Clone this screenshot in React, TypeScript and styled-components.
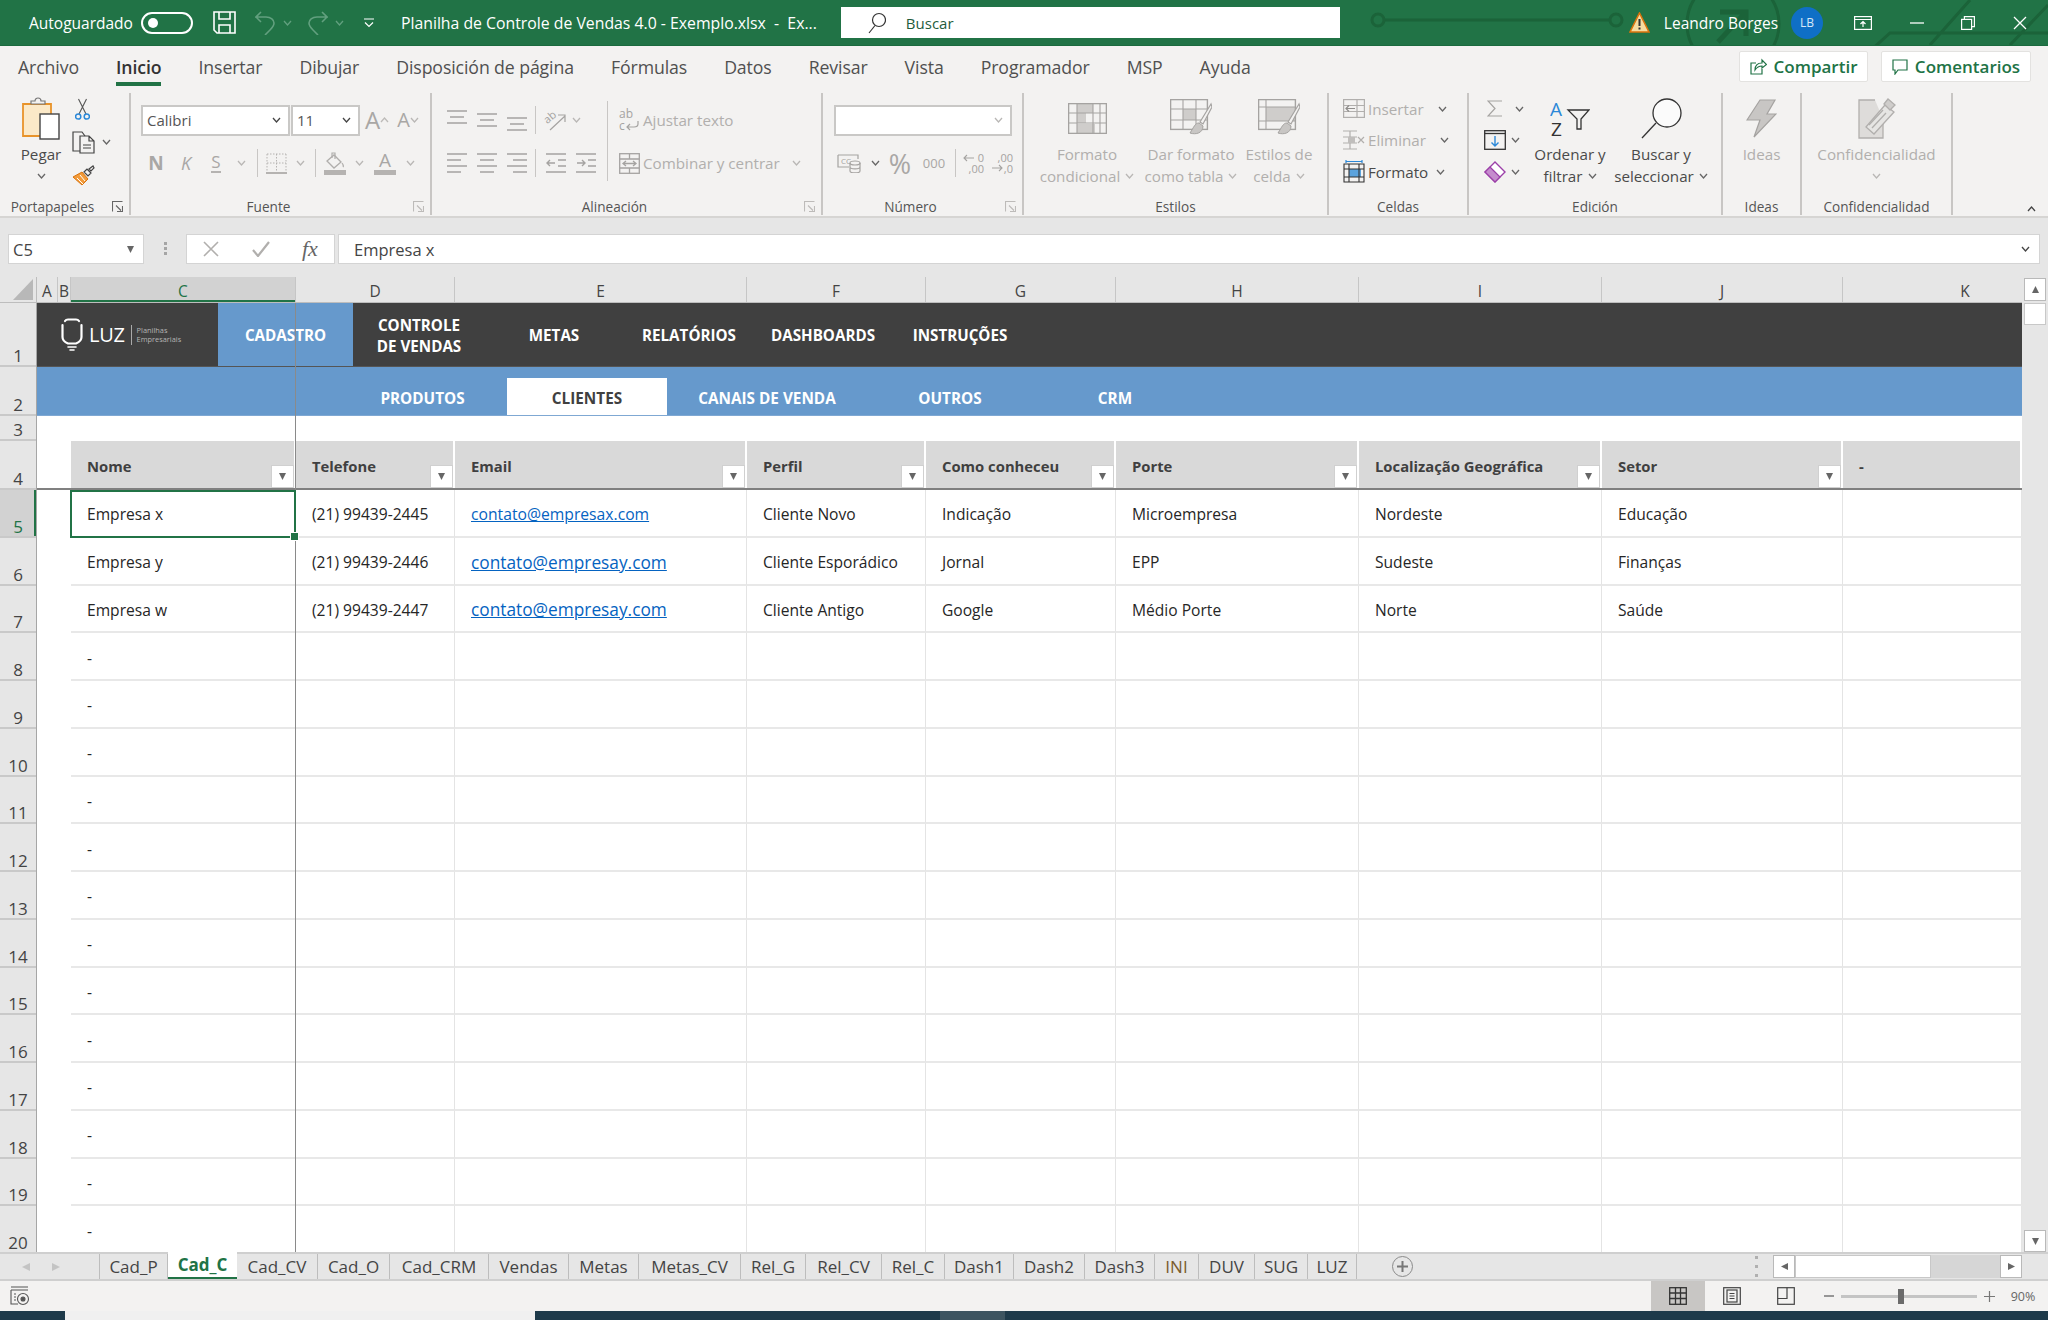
import React from 'react';
import styled, { createGlobalStyle } from 'styled-components';

const FONT = `"Open Sans", "Noto Sans", Arial, sans-serif`;
const GREEN = '#217346';
const OFF = '#b1afad';
const INK = '#4a4a4a';

const GlobalStyle = createGlobalStyle`
  html, body { margin: 0; padding: 0; background: #e6e6e6; overflow: hidden; }
  * { box-sizing: border-box; }
`;

const Window = styled.div`
  width: 2048px;
  height: 1320px;
  display: flex;
  flex-direction: column;
  font-family: ${FONT};
  overflow: hidden;
`;

/* ---------- title bar ---------- */
const TitleBar = styled.header`
  position: relative;
  height: 46px;
  flex: none;
  display: flex;
  align-items: center;
  padding-left: 29px;
  background: ${GREEN};
  border-bottom: 1px solid #1b6a3e;
  color: #fff;
  font-size: 15.5px;
`;
const Circuit = styled.svg`
  position: absolute;
  left: 1360px;
  top: 0;
`;
const TitleSlot = styled.div<{ $w?: number; $ml?: number }>`
  position: relative;
  flex: none;
  display: flex;
  align-items: center;
  justify-content: center;
  ${p => (p.$w ? `width: ${p.$w}px;` : '')}
  margin-left: ${p => p.$ml || 0}px;
`;
const TitleText = styled.span<{ $ml?: number; $size?: number }>`
  position: relative;
  flex: none;
  white-space: pre;
  margin-left: ${p => p.$ml || 0}px;
  ${p => (p.$size ? `font-size: ${p.$size}px;` : '')}
`;
const Toggle = styled.div`
  position: relative;
  flex: none;
  margin-left: 8px;
  width: 52px;
  height: 22px;
  border: 2px solid #fff;
  border-radius: 11px;
  display: flex;
  align-items: center;
  padding-left: 5px;
  &::before {
    content: '';
    width: 10px;
    height: 10px;
    border-radius: 50%;
    background: #fff;
  }
`;
const SearchBox = styled.div`
  position: relative;
  flex: none;
  width: 499px;
  height: 31px;
  margin-left: 24px;
  background: #fff;
  display: flex;
  align-items: center;
  padding-left: 27px;
  gap: 20px;
  color: #1f5c3d;
  font-size: 15px;
`;
const Avatar = styled.div`
  position: relative;
  flex: none;
  width: 32px;
  height: 32px;
  margin-left: 13px;
  border-radius: 50%;
  background: #0f6fc6;
  color: #d6e8f8;
  font-size: 12px;
  display: flex;
  align-items: center;
  justify-content: center;
`;

/* ---------- tabs ---------- */
const TabBar = styled.nav`
  height: 44px;
  flex: none;
  background: #f3f2f1;
  display: flex;
  align-items: flex-start;
  padding: 5px 17px 0 18px;
  gap: 37px;
`;
const RibbonTab = styled.div<{ $on?: boolean }>`
  position: relative;
  height: 35px;
  line-height: 33px;
  font-size: 17.7px;
  letter-spacing: -0.1px;
  white-space: nowrap;
  color: ${p => (p.$on ? '#333' : '#505050')};
  font-weight: ${p => (p.$on ? 600 : 400)};
  border-bottom: ${p => (p.$on ? `4px solid ${GREEN}` : '4px solid transparent')};
`;
const TabActions = styled.div`
  margin-left: auto;
  display: flex;
  gap: 13px;
`;
const ActionButton = styled.div<{ $w: number }>`
  width: ${p => p.$w}px;
  height: 31px;
  background: #fff;
  border: 1px solid #e3e2e0;
  border-radius: 2px;
  color: ${GREEN};
  font-size: 17px;
  font-weight: 600;
  display: flex;
  align-items: center;
  justify-content: center;
  gap: 7px;
`;

/* ---------- ribbon ---------- */
const Ribbon = styled.section`
  height: 128px;
  flex: none;
  background: #f3f2f1;
  border-bottom: 2px solid #d6d5d3;
  display: flex;
  padding-top: 3px;
`;
const Group = styled.div<{ $w: number }>`
  width: ${p => p.$w}px;
  height: 122px;
  flex: none;
  display: flex;
  flex-direction: column;
  border-right: 2px solid #c8c6c4;
`;
const GroupBody = styled.div<{ $pl?: number }>`
  height: 104px;
  flex: none;
  display: flex;
  padding-left: ${p => p.$pl || 0}px;
`;
const GroupFoot = styled.div`
  height: 18px;
  display: flex;
  align-items: center;
  font-size: 13.6px;
  color: #555;
`;
const GroupName = styled.div`
  flex: 1;
  text-align: center;
  white-space: nowrap;
`;
const Launcher = styled.div`
  width: 24px;
  display: flex;
  justify-content: center;
`;
const Col = styled.div<{ $w?: number; $ml?: number }>`
  flex: none;
  display: flex;
  flex-direction: column;
  align-items: center;
  ${p => (p.$w ? `width: ${p.$w}px;` : '')}
  margin-left: ${p => p.$ml || 0}px;
`;
const Rows = styled.div<{ $w?: number; $pl?: number }>`
  flex: none;
  display: flex;
  flex-direction: column;
  gap: 9px;
  padding-top: 10px;
  padding-left: ${p => p.$pl || 0}px;
  ${p => (p.$w ? `width: ${p.$w}px;` : '')}
`;
const Row = styled.div`
  height: 34px;
  display: flex;
  align-items: center;
`;
const Slot = styled.div<{ $w: number; $ml?: number }>`
  width: ${p => p.$w}px;
  flex: none;
  margin-left: ${p => p.$ml || 0}px;
  display: flex;
  align-items: center;
  justify-content: center;
`;
const RowSep = styled.div<{ $mx?: number }>`
  width: 1px;
  height: 28px;
  flex: none;
  background: #c8c6c4;
  margin: 0 ${p => p.$mx || 0}px;
`;
const TallSep = styled.div`
  width: 1px;
  height: 80px;
  margin-top: 8px;
  flex: none;
  background: #c8c6c4;
`;
const Select = styled.div<{ $w: number }>`
  width: ${p => p.$w}px;
  height: 31px;
  flex: none;
  background: #fff;
  border: 2px solid #c9c8c6;
  margin-right: 1px;
  padding: 0 7px 0 4px;
  display: flex;
  align-items: center;
  justify-content: space-between;
  font-size: 15px;
  color: #555;
`;
const RibbonText = styled.span<{ $off?: boolean; $ml?: number }>`
  font-size: 15.2px;
  white-space: nowrap;
  color: ${p => (p.$off ? OFF : INK)};
  margin-left: ${p => p.$ml || 0}px;
`;
const FontMark = styled.span<{ $size: number; $weight?: number; $italic?: boolean; $line?: boolean }>`
  font-size: ${p => p.$size}px;
  font-weight: ${p => p.$weight || 400};
  font-style: ${p => (p.$italic ? 'italic' : 'normal')};
  color: #a9a7a5;
  line-height: 1;
  ${p => (p.$line ? 'border-bottom: 2px solid #b5b3b1; padding-bottom: 1px;' : '')}
`;
const BigButton = styled.div<{ $w: number }>`
  width: ${p => p.$w}px;
  flex: none;
  display: flex;
  flex-direction: column;
  align-items: center;
`;
const BigIcon = styled.div`
  height: 50px;
  display: flex;
  align-items: center;
  justify-content: center;
`;
const BigLine = styled.div<{ $off?: boolean }>`
  height: 22px;
  line-height: 22px;
  font-size: 15.2px;
  white-space: nowrap;
  color: ${p => (p.$off ? OFF : INK)};
  display: flex;
  align-items: center;
  gap: 5px;
`;
const CellRow = styled.div<{ $w?: number; $h?: number; $pl?: number; $gap?: number }>`
  height: ${p => p.$h || 31.5}px;
  ${p => (p.$w ? `width: ${p.$w}px;` : '')}
  padding-left: ${p => p.$pl || 0}px;
  gap: ${p => p.$gap || 0}px;
  display: flex;
  align-items: center;
`;
const Collapse = styled.div`
  flex: 1;
  display: flex;
  justify-content: flex-end;
  align-items: flex-end;
  padding: 0 12px 4px 0;
`;

/* ---------- formula bar ---------- */
const FormulaBar = styled.div`
  height: 59px;
  flex: none;
  background: #e6e6e6;
  padding: 16px 8px 13px 8px;
  display: flex;
  align-items: stretch;
  color: #444;
`;
const NameBox = styled.div`
  width: 136px;
  background: #fff;
  border: 1px solid #d4d4d4;
  display: flex;
  align-items: center;
  justify-content: space-between;
  padding: 0 9px 0 4px;
  font-size: 16.5px;
`;
const BarDots = styled.div`
  width: 42px;
  display: flex;
  justify-content: center;
  align-items: center;
`;
const FnBox = styled.div`
  width: 149px;
  background: #fff;
  border: 1px solid #d4d4d4;
  display: flex;
  align-items: center;
  justify-content: space-around;
`;
const FxMark = styled.span`
  font-family: "Liberation Serif", serif;
  font-style: italic;
  font-size: 22px;
  color: #666;
`;
const FormulaInput = styled.div`
  flex: 1;
  margin-left: 3px;
  background: #fff;
  border: 1px solid #d4d4d4;
  display: flex;
  align-items: center;
  justify-content: space-between;
  padding: 0 9px 0 15px;
  font-size: 16.5px;
`;

/* ---------- sheet ---------- */
const TRACKS = '21px 13px 225px 159px 292px 179px 190px 243px 243px 241px 179px';

const SheetArea = styled.div`
  flex: none;
  height: 975px;
  display: flex;
`;
const SheetMain = styled.div`
  width: 2022px;
  display: flex;
  flex-direction: column;
`;
const ColHeaders = styled.div`
  height: 26px;
  flex: none;
  display: grid;
  grid-template-columns: 37px ${TRACKS};
  background: #e6e6e6;
  border-bottom: 1px solid #bdbdbd;
`;
const Corner = styled.div`
  display: flex;
  justify-content: flex-end;
  align-items: flex-end;
  padding: 0 3px 2px 0;
  border-right: 1px solid #bdbdbd;
`;
const ColHead = styled.div<{ $on?: boolean; $wide?: boolean }>`
  display: flex;
  align-items: center;
  justify-content: center;
  padding-top: 2px;
  padding-left: ${p => (p.$wide ? 65 : 0)}px;
  font-size: 15.5px;
  color: ${p => (p.$on ? GREEN : '#444')};
  background: ${p => (p.$on ? '#d2d2d2' : 'transparent')};
  border-right: ${p => (p.$wide ? 'none' : '1px solid #c6c6c6')};
  ${p => (p.$on ? `box-shadow: inset 0 -2px 0 ${GREEN};` : '')}
`;
const SheetBody = styled.div`
  flex: 1;
  min-height: 0;
  display: flex;
`;
const RowHeads = styled.div`
  width: 37px;
  flex: none;
  overflow: hidden;
  background: #e6e6e6;
  border-right: 1px solid #a6a6a6;
`;
const RowHead = styled.div<{ $h: number; $on?: boolean }>`
  height: ${p => p.$h}px;
  display: flex;
  align-items: flex-end;
  justify-content: center;
  font-size: 17px;
  line-height: 19px;
  color: ${p => (p.$on ? GREEN : '#444')};
  background: ${p => (p.$on ? '#d2d2d2' : 'transparent')};
  border-bottom: 2px solid #c9c9c9;
  ${p => (p.$on ? `box-shadow: inset -2px 0 0 ${GREEN};` : '')}
`;
const Canvas = styled.div`
  position: relative;
  width: 1985px;
  overflow: hidden;
  background: #fff;
`;
const FreezeLine = styled.div`
  position: absolute;
  left: 258px;
  top: 0;
  bottom: 0;
  width: 1px;
  background: #8a8a8a;
`;
const MainNav = styled.div`
  height: 64px;
  display: flex;
  background: #404040;
  color: #fff;
  font-weight: 700;
  font-size: 15.2px;
  border-bottom: 1px solid #555;
`;
const Logo = styled.div`
  width: 181px;
  flex: none;
  display: flex;
  align-items: center;
  padding-left: 24px;
`;
const LogoWord = styled.span`
  font-size: 20px;
  font-weight: 400;
  margin-left: 6px;
  letter-spacing: -0.3px;
`;
const LogoRule = styled.span`
  width: 1px;
  height: 20px;
  background: #aaa;
  margin: 0 5px 0 6px;
`;
const LogoTag = styled.span`
  font-size: 7.4px;
  line-height: 9px;
  font-weight: 400;
  color: #b4b4b4;
`;
const NavItem = styled.div<{ $w: number; $on?: boolean }>`
  width: ${p => p.$w}px;
  flex: none;
  display: flex;
  align-items: center;
  justify-content: center;
  text-align: center;
  line-height: 21px;
  padding-top: 2px;
  background: ${p => (p.$on ? '#6699cc' : 'transparent')};
`;
const SubNav = styled.div`
  height: 49px;
  display: flex;
  align-items: flex-end;
  padding-left: 301px;
  background: #6699cc;
  color: #fff;
  font-weight: 700;
  font-size: 15.3px;
  border-bottom: 1px solid #7fa8d3;
`;
const SubItem = styled.div<{ $w: number; $on?: boolean }>`
  width: ${p => p.$w}px;
  height: 37px;
  flex: none;
  display: flex;
  align-items: center;
  justify-content: center;
  padding-top: 3px;
  background: ${p => (p.$on ? '#fff' : 'transparent')};
  color: ${p => (p.$on ? '#404040' : '#fff')};
`;
const Gap = styled.div`
  height: 25px;
`;
const HeadRow = styled.div`
  height: 49px;
  display: grid;
  grid-template-columns: ${TRACKS};
  border-bottom: 2px solid #808080;
`;
const HeadCell = styled.div<{ $fill?: boolean }>`
  position: relative;
  display: flex;
  align-items: center;
  padding: 3px 0 0 16px;
  background: ${p => (p.$fill ? '#d9d9d9' : 'transparent')};
  border-right: ${p => (p.$fill ? '2px solid #fff' : 'none')};
  color: #404040;
  font-size: 14.8px;
  font-weight: 700;
  white-space: nowrap;
`;
const FilterBtn = styled.div`
  position: absolute;
  right: 0;
  bottom: 0;
  width: 23px;
  height: 23px;
  background: #fff;
  border: 1px solid #d0d0d0;
  display: flex;
  align-items: center;
  justify-content: center;
`;
const DataRow = styled.div`
  height: 47.75px;
  display: grid;
  grid-template-columns: ${TRACKS};
`;
const Cell = styled.div<{ $blank?: boolean; $picked?: boolean }>`
  position: relative;
  display: flex;
  align-items: center;
  padding: 3px 0 0 16px;
  font-size: 15.6px;
  color: #262626;
  white-space: nowrap;
  border-bottom: 2px solid #e8e8e8;
  border-right: ${p => (p.$blank ? 'none' : '1px solid #e4e4e4')};
  ${p => (p.$blank ? 'border-bottom: none;' : '')}
  ${p =>
    p.$picked
      ? `border: 2px solid ${GREEN};
         margin-left: -1px;
         padding-left: 15px;
         padding-top: 1px;
         z-index: 1;
         &::after {
           content: '';
           position: absolute;
           right: -5px;
           bottom: -5px;
           width: 7px;
           height: 7px;
           background: ${GREEN};
           border: 1px solid #fff;
         }`
      : ''}
`;
const MailLink = styled.a<{ $big?: boolean }>`
  color: #0563c1;
  text-decoration: underline;
  font-size: ${p => (p.$big ? 17.3 : 15.7)}px;
`;

/* ---------- scroll bars ---------- */
const VScroll = styled.div`
  width: 26px;
  flex: none;
  display: flex;
  flex-direction: column;
  align-items: center;
  padding-top: 1px;
  background: #e6e6e6;
`;
const ScrollBtn = styled.div<{ $w: number; $h: number }>`
  width: ${p => p.$w}px;
  height: ${p => p.$h}px;
  flex: none;
  background: #fff;
  border: 1px solid #b9b9b9;
  display: flex;
  align-items: center;
  justify-content: center;
`;
const VThumb = styled.div`
  width: 22px;
  height: 22px;
  flex: none;
  margin-top: 2px;
  background: #fff;
  border: 1px solid #c8c8c8;
`;
const VTrack = styled.div`
  flex: 1;
`;

/* ---------- sheet tabs ---------- */
const SheetTabs = styled.div`
  height: 29px;
  flex: none;
  display: flex;
  align-items: stretch;
  background: #e6e6e6;
  border-top: 2px solid #cfcfcf;
  border-bottom: 2px solid #cfcfcf;
`;
const TabArrows = styled.div`
  width: 100px;
  flex: none;
  display: flex;
  align-items: center;
  padding-left: 22px;
  gap: 22px;
  border-right: 1px solid #bdbdbd;
`;
const SheetTab = styled.div<{ $w: number; $on?: boolean; $tint?: string }>`
  width: ${p => p.$w}px;
  flex: none;
  display: flex;
  align-items: center;
  justify-content: center;
  margin-top: ${p => (p.$on ? -2 : 0)}px;
  font-size: 17px;
  font-weight: ${p => (p.$on ? 700 : 400)};
  color: ${p => (p.$on ? GREEN : p.$tint || '#444')};
  background: ${p => (p.$on ? '#fff' : 'transparent')};
  border-right: ${p => (p.$on ? 'none' : '1px solid #bdbdbd')};
  border-bottom: ${p => (p.$on ? `2px solid ${GREEN}` : 'none')};
`;
const AddSheet = styled.div`
  width: 21px;
  height: 21px;
  flex: none;
  align-self: center;
  margin-left: 35px;
  border: 1px solid #8a8a8a;
  border-radius: 50%;
  display: flex;
  align-items: center;
  justify-content: center;
`;
const HScroll = styled.div`
  margin-left: auto;
  margin-right: 26px;
  display: flex;
  align-items: center;
`;
const HDots = styled.svg`
  margin-right: 15px;
`;
const HThumb = styled.div`
  width: 136px;
  height: 23px;
  flex: none;
  background: #fff;
  border: 1px solid #c8c8c8;
`;
const HTrack = styled.div`
  width: 69px;
  height: 23px;
  flex: none;
  background: #d6d6d6;
`;

/* ---------- status ---------- */
const StatusBar = styled.footer`
  height: 30px;
  flex: none;
  background: #f3f2f1;
  display: flex;
  align-items: center;
  padding-left: 10px;
  font-size: 12.5px;
  color: #666;
`;
const ViewButton = styled.div<{ $on?: boolean; $w: number; $ml?: number }>`
  width: ${p => p.$w}px;
  height: 30px;
  flex: none;
  margin-left: ${p => p.$ml || 0}px;
  background: ${p => (p.$on ? '#c8c6c4' : 'transparent')};
  display: flex;
  align-items: center;
  justify-content: center;
`;
const ZoomTrack = styled.div`
  position: relative;
  width: 136px;
  height: 3px;
  flex: none;
  margin: 0 6px;
  background: #c4c4c4;
`;
const ZoomKnob = styled.div`
  position: absolute;
  left: 57px;
  top: -6px;
  width: 6px;
  height: 15px;
  background: #6b6b6b;
`;
const Taskbar = styled.div`
  height: 9px;
  flex: none;
  display: flex;
  background: #1e3a4a;
`;
const TaskPiece = styled.div<{ $w: number; $ml: number; $bg: string }>`
  width: ${p => p.$w}px;
  margin-left: ${p => p.$ml}px;
  background: ${p => p.$bg};
`;

/* ---------- icons ---------- */
const Chev = ({ c = '#666', up = false }: { c?: string; up?: boolean }) => (
  <svg width="9" height="6" viewBox="0 0 9 6" fill="none">
    <path d={up ? 'M1 5l3.5-4L8 5' : 'M1 1l3.5 4L8 1'} stroke={c} strokeWidth="1.3" />
  </svg>
);
const OffChev = () => <Chev c="#b9b7b5" />;

const SaveIcon = () => (
  <svg width="23" height="23" viewBox="0 0 23 23" fill="none" stroke="#fff" strokeWidth="1.6">
    <path d="M1 1h21v21H4l-3-3z" />
    <path d="M6 1v7h11V1M6 22v-8h11v8" />
  </svg>
);
const UndoIcon = ({ flip = false }: { flip?: boolean }) => (
  <svg width="21" height="24" viewBox="0 0 21 24" fill="none" stroke="#62a07f" strokeWidth="1.6"
    transform={flip ? 'scale(-1,1)' : undefined}>
    <path d="M6 1L1 6h10c5 0 8 3 8 6s-2 5-4 7l-5 5M1 6l5 5" />
  </svg>
);
const QatIcon = () => (
  <svg width="10" height="10" viewBox="0 0 10 10" fill="none" stroke="#fff" strokeWidth="1.2">
    <path d="M0 1h10M1 4.5l4 4 4-4" />
  </svg>
);
const SearchIcon = () => (
  <svg width="18" height="22" viewBox="0 0 18 22" fill="none" stroke="#333" strokeWidth="1.2">
    <circle cx="11" cy="8" r="6.5" />
    <path d="M7 13.5L1 21" />
  </svg>
);
const WarnIcon = () => (
  <svg width="21" height="21" viewBox="0 0 21 21">
    <path d="M10.5 1L20 20H1z" fill="#f6dca0" stroke="#d9730d" strokeWidth="1.6" />
    <path d="M10.5 7v7M10.5 15.5v2" stroke="#333" strokeWidth="2" />
  </svg>
);
const RibbonModeIcon = () => (
  <svg width="18" height="14" viewBox="0 0 18 14" fill="none" stroke="#fff" strokeWidth="1.2">
    <rect x="0.6" y="0.6" width="16.8" height="12.8" />
    <path d="M0.6 3.5h16.8M9 11V5.5M6.5 8L9 5.5 11.5 8" />
  </svg>
);
const MinIcon = () => (
  <svg width="14" height="2" viewBox="0 0 14 2"><path d="M0 1h14" stroke="#fff" strokeWidth="1.3" /></svg>
);
const RestoreIcon = () => (
  <svg width="14" height="14" viewBox="0 0 14 14" fill="none" stroke="#fff" strokeWidth="1.2">
    <rect x="0.6" y="3.4" width="10" height="10" />
    <path d="M3.4 3.4V0.6h10v10h-2.8" />
  </svg>
);
const CloseIcon = () => (
  <svg width="14" height="14" viewBox="0 0 14 14" stroke="#fff" strokeWidth="1.3">
    <path d="M1 1l12 12M13 1L1 13" />
  </svg>
);
const ShareIcon = () => (
  <svg width="17" height="17" viewBox="0 0 17 17" fill="none" stroke={GREEN} strokeWidth="1.2">
    <path d="M6 5H1v11h11v-5" />
    <path d="M5 12c0-5 3-7 7-7V2l4.5 4.5L12 10V8c-3 0-5 1-7 4z" />
  </svg>
);
const CommentIcon = () => (
  <svg width="16" height="16" viewBox="0 0 16 16" fill="none" stroke={GREEN} strokeWidth="1.2">
    <path d="M1 1h14v10H6l-3 4v-4H1z" />
  </svg>
);
const LauncherIcon = ({ c = '#666' }: { c?: string }) => (
  <svg width="11" height="11" viewBox="0 0 11 11" fill="none" stroke={c} strokeWidth="1.1">
    <path d="M0.5 10.5V0.5h10M10 10.5L4 4.5M5 10.5h5.5V5" />
  </svg>
);
const PasteIcon = () => (
  <svg width="38" height="43" viewBox="0 0 38 43">
    <path d="M1 7h28v32H1z" fill="#fbe9c8" stroke="#e8932a" strokeWidth="1.8" />
    <path d="M9 7V4h4c0-4 6-4 6 0h4v3z" fill="#f3f2f1" stroke="#777" strokeWidth="1.2" />
    <rect x="18" y="17" width="19" height="25" fill="#fff" stroke="#444" strokeWidth="1.4" />
  </svg>
);
const CutIcon = () => (
  <svg width="15" height="22" viewBox="0 0 15 22" fill="none">
    <path d="M3.5 1L11 16M11.5 1L4 16" stroke="#555" strokeWidth="1.1" />
    <circle cx="3.2" cy="18.5" r="2.6" stroke="#2b88d8" strokeWidth="1.5" />
    <circle cx="11.8" cy="18.5" r="2.6" stroke="#2b88d8" strokeWidth="1.5" />
  </svg>
);
const CopyIcon = () => (
  <svg width="23" height="23" viewBox="0 0 23 23" fill="none" stroke="#444" strokeWidth="1.2">
    <path d="M8 20H1V1h9l3 4" />
    <path d="M8 5h9l5 5v12H8zM17 5v5h5M11 14h8M11 17h8" />
  </svg>
);
const PainterIcon = () => (
  <svg width="23" height="21" viewBox="0 0 23 21">
    <path d="M1 12l9-5 6 7-6 6z" fill="#f29b3a" stroke="#d9730d" strokeWidth="1" />
    <path d="M5 13l6 6M8 10l5 6" stroke="#fff" strokeWidth="1" />
    <path d="M12 7l3-3 4 4-3 3zM17 4l4-3 1 2-3 3z" fill="none" stroke="#444" strokeWidth="1.2" />
  </svg>
);
const BorderIcon = () => (
  <svg width="21" height="21" viewBox="0 0 21 21" fill="none" stroke="#b5b3b1">
    <path d="M1 1h19M1 10h19M1 1v18M10.500 1v18M20 1v18" strokeDasharray="1.5 1.5" />
    <path d="M0 20h21" strokeWidth="2" />
  </svg>
);
const FillIcon = () => (
  <svg width="22" height="23" viewBox="0 0 22 23" fill="none">
    <path d="M3 9l7-6 7 7-7 6z" stroke="#b0aeac" strokeWidth="1.3" />
    <path d="M8 6V1h3v6M18 11c1.5 2 2 3 1 4" stroke="#b0aeac" strokeWidth="1.2" />
    <rect x="0" y="18" width="22" height="5" fill="#b5b3b1" />
  </svg>
);
const FontColor = () => (
  <svg width="22" height="23" viewBox="0 0 22 23">
    <text x="11" y="15" fontSize="19" textAnchor="middle" fill="#a9a7a5" fontFamily={FONT}>A</text>
    <rect x="0" y="18" width="22" height="5" fill="#b5b3b1" />
  </svg>
);
const AlignV = ({ top }: { top: number }) => (
  <svg width="20" height="24" viewBox="0 0 20 24" stroke="#a5a3a1" strokeWidth="1.4">
    <path d={`M0 ${top}h20M3 ${top + 6}h14M0 ${top + 12}h20`} />
  </svg>
);
const AlignH = ({ kind }: { kind: 'l' | 'c' | 'r' }) => {
  const x = kind === 'l' ? 0 : kind === 'c' ? 3 : 6;
  return (
    <svg width="20" height="20" viewBox="0 0 20 20" stroke="#a5a3a1" strokeWidth="1.4">
      <path d={`M0 1h20M${x} 7h14M0 13h20M${x} 19h14`} />
    </svg>
  );
};
const OrientIcon = () => (
  <svg width="24" height="24" viewBox="0 0 24 24" fill="none">
    <text x="1" y="13" fontSize="11" fill="#a5a3a1" fontFamily={FONT} transform="rotate(-40 7 10)">ab</text>
    <path d="M7 22L22 8M15 7h7v7" stroke="#a5a3a1" strokeWidth="1.2" />
  </svg>
);
const IndentIcon = ({ out }: { out?: boolean }) => (
  <svg width="20" height="20" viewBox="0 0 20 20" fill="none" stroke="#a5a3a1" strokeWidth="1.4">
    <path d="M0 1h20M0 19h20M12 7h8M12 13h8" />
    <path d={out ? 'M9 10H1M4 7l-3 3 3 3' : 'M1 10h8M6 7l3 3-3 3'} />
  </svg>
);
const WrapIcon = () => (
  <svg width="20" height="24" viewBox="0 0 20 24" fill="none">
    <text x="0" y="10" fontSize="12" fill="#a5a3a1" fontFamily={FONT}>ab</text>
    <text x="0" y="22" fontSize="12" fill="#a5a3a1" fontFamily={FONT}>c</text>
    <path d="M19 13v3c0 3-2 3-4 3H8M11 16l-3 3 3 3" stroke="#a5a3a1" strokeWidth="1.2" />
  </svg>
);
const MergeIcon = () => (
  <svg width="21" height="21" viewBox="0 0 21 21" fill="none" stroke="#a5a3a1" strokeWidth="1.3">
    <rect x="0.7" y="0.7" width="19.6" height="19.6" />
    <path d="M0.7 6h19.6M0.7 15h19.6M10.5 0.7V6M10.5 15v5.3M4 10.5h13M7 8l-3 2.5L7 13M14 8l3 2.5L14 13" />
  </svg>
);
const AcctIcon = () => (
  <svg width="24" height="19" viewBox="0 0 24 19" fill="none" stroke="#a5a3a1" strokeWidth="1.2">
    <path d="M1 1h20v4M1 1v12h11" />
    <text x="4" y="10" fontSize="8" fill="#a5a3a1" stroke="none" fontFamily={FONT}>CC</text>
    <ellipse cx="18" cy="9" rx="5" ry="2" fill="#f3f2f1" />
    <path d="M13 9v8c0 2.5 10 2.5 10 0V9M13 13c0 2.5 10 2.5 10 0" />
  </svg>
);
const DecimalIcon = ({ more }: { more?: boolean }) => (
  <svg width="23" height="23" viewBox="0 0 23 23" fill="none">
    <text x="22" y="10" fontSize="11" textAnchor="end" fill="#a5a3a1" fontFamily={FONT}>{more ? ',00' : '0'}</text>
    <text x="22" y="21" fontSize="11" textAnchor="end" fill="#a5a3a1" fontFamily={FONT}>{more ? ',0' : ',00'}</text>
    <path d={more ? 'M1 16h10M8 13l3 3-3 3' : 'M12 6H2M5 3L2 6l3 3'} stroke="#a5a3a1" strokeWidth="1.1" />
  </svg>
);
const GridLines = ({ w, h, xs, ys }: { w: number; h: number; xs: number[]; ys: number[] }) => (
  <g stroke="#a5a3a1" strokeWidth="1.1" fill="none">
    <rect x="0.6" y="0.6" width={w - 1.2} height={h - 1.2} strokeWidth="1.4" />
    {xs.map(x => <path key={`x${x}`} d={`M${x} 0v${h}`} />)}
    {ys.map(y => <path key={`y${y}`} d={`M0 ${y}h${w}`} />)}
  </g>
);
const Brush = () => (
  <g transform="translate(13,2)">
    <path d="M28 3L17 21l3 2L29 6z" fill="#f3f2f1" stroke="#a5a3a1" strokeWidth="1.2" />
    <path d="M16 22c-4 0-5 4-9 10 6 2 13 0 13-7z" fill="#c8c6c4" stroke="#a5a3a1" strokeWidth="1" />
  </g>
);
const CondIcon = () => (
  <svg width="39" height="31" viewBox="0 0 39 31">
    <rect x="9" y="1" width="16" height="9" fill="#cfcdcb" />
    <rect x="9" y="10" width="9" height="10" fill="#cfcdcb" />
    <rect x="9" y="21" width="18" height="9" fill="#cfcdcb" />
    <GridLines w={39} h={31} xs={[9, 25, 32]} ys={[10, 20]} />
  </svg>
);
const TableIcon = () => (
  <svg width="42" height="38" viewBox="0 0 42 38">
    <rect x="13" y="10" width="13" height="11" fill="#cfcdcb" />
    <GridLines w={38} h={31} xs={[13, 26]} ys={[10, 21]} />
    <Brush />
  </svg>
);
const CellStyleIcon = () => (
  <svg width="42" height="38" viewBox="0 0 42 38">
    <rect x="8" y="8" width="30" height="14" fill="#cfcdcb" />
    <GridLines w={38} h={31} xs={[8]} ys={[8, 22]} />
    <Brush />
  </svg>
);
const InsertIcon = () => (
  <svg width="22" height="19" viewBox="0 0 22 19" fill="none" stroke="#b1afad" strokeWidth="1.2">
    <rect x="0.6" y="0.6" width="20.8" height="17.8" />
    <path d="M0.6 6.5h20.8M0.6 12.5h20.8M14 0.6v17.8" />
    <path d="M12 9.5H3M6 6.5l-3 3 3 3" stroke="#8f8d8b" />
  </svg>
);
const DeleteIcon = () => (
  <svg width="22" height="20" viewBox="0 0 22 20" fill="none" stroke="#b1afad" strokeWidth="1.2">
    <path d="M0 1h14M0 7h14M0 13h14M0 19h14M7 1v18" />
    <rect x="5" y="7" width="7" height="6" fill="#c0bebc" stroke="none" />
    <path d="M15 7l6 6M21 7l-6 6" />
  </svg>
);
const FormatIcon = () => (
  <svg width="22" height="23" viewBox="0 0 22 23" fill="none">
    <path d="M3 1.5h16M3 0v3M19 0v3" stroke="#2b88d8" strokeWidth="1.2" />
    <rect x="6" y="9" width="12" height="8" fill="#5ba3dd" />
    <path d="M1 4h20v18H1zM1 9h20M1 17h20M6 4v18M16 4v18" stroke="#333" strokeWidth="1.1" />
  </svg>
);
const SumIcon = () => (
  <svg width="16" height="17" viewBox="0 0 16 17" fill="none" stroke="#a5a3a1" strokeWidth="1.2">
    <path d="M15 1H1l7 7.5L1 16h14" />
  </svg>
);
const FillDownIcon = () => (
  <svg width="22" height="20" viewBox="0 0 22 20" fill="none">
    <rect x="0.7" y="0.7" width="20.6" height="18.6" stroke="#333" strokeWidth="1.3" />
    <path d="M0.7 3.5h20.6" stroke="#333" strokeWidth="1.3" />
    <path d="M11 6v10M7.5 12.5L11 16l3.5-3.5" stroke="#2b88d8" strokeWidth="1.4" />
  </svg>
);
const EraserIcon = () => (
  <svg width="22" height="22" viewBox="0 0 22 22">
    <path d="M11 1l10 10-10 10L1 11z" fill="#fff" stroke="#9b3fa8" strokeWidth="1.4" />
    <path d="M6 6l10 10-5 5L1 11z" fill="#c58ccd" stroke="#9b3fa8" strokeWidth="1.2" />
  </svg>
);
const SortIcon = () => (
  <svg width="40" height="37" viewBox="0 0 40 37" fill="none">
    <text x="0" y="16" fontSize="19" fill="#2b88d8" fontFamily={FONT}>A</text>
    <text x="1" y="36" fontSize="19" fill="#333" fontFamily={FONT}>Z</text>
    <path d="M18 10h21l-8 9v10h-4V19z" stroke="#333" strokeWidth="1.3" />
  </svg>
);
const FindIcon = () => (
  <svg width="41" height="41" viewBox="0 0 41 41" fill="none" stroke="#333" strokeWidth="1.3">
    <circle cx="26" cy="15" r="14" fill="#fbfbfb" />
    <path d="M15 25L1 40" />
  </svg>
);
const BoltIcon = () => (
  <svg width="31" height="39" viewBox="0 0 31 39">
    <path d="M14 1h15L21 15h9L8 38l6-17H1z" fill="#c8c6c4" stroke="#a5a3a1" strokeWidth="1.2" />
  </svg>
);
const SensIcon = () => (
  <svg width="38" height="42" viewBox="0 0 38 42" fill="none" stroke="#b1afad" strokeWidth="1.3">
    <path d="M17 3H1v38h24V22" fill="#dedcda" />
    <path d="M8 30L27 8l9 7-20 22z" fill="#e6e5e3" />
    <path d="M11 28l14-15M14 31l14-15" />
    <path d="M26 7l4-5 7 6-5 5z" fill="#cfcdcb" />
  </svg>
);
const CrossIcon = () => (
  <svg width="16" height="16" viewBox="0 0 16 16" stroke="#b1afad" strokeWidth="1.6"><path d="M1 1l14 14M15 1L1 15" /></svg>
);
const CheckIcon = () => (
  <svg width="18" height="16" viewBox="0 0 18 16" fill="none" stroke="#b1afad" strokeWidth="2.2"><path d="M1 9l5 6L17 1" /></svg>
);
const Tri = ({ dir, c = '#666', s = 8 }: { dir: 'u' | 'd' | 'l' | 'r'; c?: string; s?: number }) => {
  const d = { u: 'M0 8L4 0l4 8z', d: 'M0 0h8L4 8z', l: 'M8 0v8L0 4z', r: 'M0 0v8l8-4z' }[dir];
  return <svg width={s} height={s} viewBox="0 0 8 8"><path d={d} fill={c} /></svg>;
};
const Bulb = () => (
  <svg width="22" height="33" viewBox="0 0 22 33" fill="none" stroke="#fff" strokeLinecap="round">
    <path d="M4 3c1-1.500 2-1.500 3-1.500h8c1 0 2 0 3 1.500" strokeWidth="2.200" />
    <path d="M1.500 7v12c0 4 3 5.500 5.500 6.500h8c2.500-1 5.500-2.500 5.500-6.500V7" strokeWidth="2.200" />
    <path d="M7 29h8M9 32h4" strokeWidth="1.600" />
  </svg>
);
const MacroIcon = () => (
  <svg width="20" height="20" viewBox="0 0 20 20" fill="none" stroke="#555" strokeWidth="1.1">
    <path d="M1 1h17M1 4h17M1 4v14h7M4 8h2M4 11h2M4 14h2" />
    <circle cx="13" cy="13" r="5.500" />
    <circle cx="13" cy="13" r="2" fill="#555" />
  </svg>
);
const NormalView = () => (
  <svg width="18" height="18" viewBox="0 0 18 18" fill="none" stroke="#333" strokeWidth="1.3">
    <rect x="0.7" y="0.7" width="16.600" height="16.600" />
    <path d="M0.7 6h16.600M0.7 11.500h16.600M6.500 0.7v16.600M11.500 0.7v16.600" />
  </svg>
);
const LayoutView = () => (
  <svg width="18" height="18" viewBox="0 0 18 18" fill="none" stroke="#444" strokeWidth="1.2">
    <rect x="0.7" y="0.7" width="16.600" height="16.600" />
    <rect x="4" y="3" width="10" height="12" />
    <path d="M6.500 6.500h5M6.500 9h5M6.500 11.500h5" />
  </svg>
);
const BreakView = () => (
  <svg width="18" height="18" viewBox="0 0 18 18" fill="none" stroke="#444" strokeWidth="1.2">
    <rect x="0.7" y="0.7" width="16.600" height="16.600" />
    <path d="M0.7 11.500H10V0.7" />
  </svg>
);

/* ---------- data ---------- */
const COLS = ['A', 'B', 'C', 'D', 'E', 'F', 'G', 'H', 'I', 'J', 'K'];
const HEADS = ['Nome', 'Telefone', 'Email', 'Perfil', 'Como conheceu', 'Porte', 'Localização Geográfica', 'Setor'];
const RIBBON_TABS = ['Archivo', 'Inicio', 'Insertar', 'Dibujar', 'Disposición de página', 'Fórmulas', 'Datos', 'Revisar', 'Vista', 'Programador', 'MSP', 'Ayuda'];
const RECORDS = [
  ['Empresa x', '(21) 99439-2445', 'contato@empresax.com', 'Cliente Novo', 'Indicação', 'Microempresa', 'Nordeste', 'Educação'],
  ['Empresa y', '(21) 99439-2446', 'contato@empresay.com', 'Cliente Esporádico', 'Jornal', 'EPP', 'Sudeste', 'Finanças'],
  ['Empresa w', '(21) 99439-2447', 'contato@empresay.com', 'Cliente Antigo', 'Google', 'Médio Porte', 'Norte', 'Saúde'],
];
const SHEETS: [string, number][] = [
  ['Cad_P', 68], ['Cad_C', 69], ['Cad_CV', 81], ['Cad_O', 72], ['Cad_CRM', 99], ['Vendas', 80], ['Metas', 70],
  ['Metas_CV', 102], ['Rel_G', 65], ['Rel_CV', 76], ['Rel_C', 63], ['Dash1', 69], ['Dash2', 71], ['Dash3', 70],
  ['INI', 44], ['DUV', 56], ['SUG', 53], ['LUZ', 49],
];
const ROW_HEIGHTS = [64, 49, 25, 49, ...Array(16).fill(47.75)];

const ClipboardGroup = () => (
  <Group $w={131}>
    <GroupBody $pl={20}>
      <Col $w={42}>
        <BigIcon><PasteIcon /></BigIcon>
        <BigLine>Pegar</BigLine>
        <BigLine><Chev /></BigLine>
      </Col>
      <Col $ml={10}>
        <CellRow $h={32} $w={48} $pl={3}><CutIcon /></CellRow>
        <CellRow $h={34} $w={48} $gap={7}><CopyIcon /><Chev /></CellRow>
        <CellRow $h={32} $w={48}><PainterIcon /></CellRow>
      </Col>
    </GroupBody>
    <GroupFoot><GroupName>Portapapeles</GroupName><Launcher><LauncherIcon /></Launcher></GroupFoot>
  </Group>
);

const FontGroup = () => (
  <Group $w={301}>
    <GroupBody $pl={10}>
      <Rows>
        <Row>
          <Select $w={149}>Calibri<Chev c="#444" /></Select>
          <Select $w={69}>11<Chev c="#444" /></Select>
          <Slot $w={32}><FontMark $size={24}>A</FontMark><Chev c="#bdbbb9" up /></Slot>
          <Slot $w={30}><FontMark $size={20}>A</FontMark><OffChev /></Slot>
        </Row>
        <Row>
          <Slot $w={30}><FontMark $size={19} $weight={700}>N</FontMark></Slot>
          <Slot $w={30}><FontMark $size={18} $italic>K</FontMark></Slot>
          <Slot $w={30}><FontMark $size={17} $line>S</FontMark></Slot>
          <Slot $w={20}><OffChev /></Slot>
          <RowSep $mx={6} />
          <Slot $w={24}><BorderIcon /></Slot>
          <Slot $w={25}><OffChev /></Slot>
          <RowSep $mx={2} />
          <Slot $w={34}><FillIcon /></Slot>
          <Slot $w={14}><OffChev /></Slot>
          <Slot $w={38}><FontColor /></Slot>
          <Slot $w={12}><OffChev /></Slot>
        </Row>
      </Rows>
    </GroupBody>
    <GroupFoot><GroupName>Fuente</GroupName><Launcher><LauncherIcon c="#bdbbb9" /></Launcher></GroupFoot>
  </Group>
);

const AlignGroup = () => (
  <Group $w={391}>
    <GroupBody $pl={10}>
      <Rows $w={165}>
        <Row>
          <Slot $w={30}><AlignV top={3} /></Slot>
          <Slot $w={30}><AlignV top={6} /></Slot>
          <Slot $w={30}><AlignV top={10} /></Slot>
          <RowSep $mx={3} />
          <Slot $w={32}><OrientIcon /></Slot>
          <Slot $w={10}><OffChev /></Slot>
        </Row>
        <Row>
          <Slot $w={30}><AlignH kind="l" /></Slot>
          <Slot $w={30}><AlignH kind="c" /></Slot>
          <Slot $w={30}><AlignH kind="r" /></Slot>
          <RowSep $mx={3} />
          <Slot $w={33}><IndentIcon out /></Slot>
          <Slot $w={27}><IndentIcon /></Slot>
        </Row>
      </Rows>
      <TallSep />
      <Rows $pl={10}>
        <Row>
          <Slot $w={22}><WrapIcon /></Slot>
          <RibbonText $off $ml={3}>Ajustar texto</RibbonText>
        </Row>
        <Row>
          <Slot $w={22}><MergeIcon /></Slot>
          <RibbonText $off $ml={3}>Combinar y centrar</RibbonText>
          <Slot $w={10} $ml={12}><OffChev /></Slot>
        </Row>
      </Rows>
    </GroupBody>
    <GroupFoot><GroupName>Alineación</GroupName><Launcher><LauncherIcon c="#bdbbb9" /></Launcher></GroupFoot>
  </Group>
);

const NumberGroup = () => (
  <Group $w={201}>
    <GroupBody $pl={11}>
      <Rows>
        <Row><Select $w={178}><span /><OffChev /></Select></Row>
        <Row>
          <Slot $w={24} $ml={3}><AcctIcon /></Slot>
          <Slot $w={28}><Chev /></Slot>
          <Slot $w={22}><FontMark $size={27}>%</FontMark></Slot>
          <Slot $w={34} $ml={6}><FontMark $size={13}>000</FontMark></Slot>
          <RowSep $mx={4} />
          <Slot $w={26}><DecimalIcon /></Slot>
          <Slot $w={26} $ml={3}><DecimalIcon more /></Slot>
        </Row>
      </Rows>
    </GroupBody>
    <GroupFoot><GroupName>Número</GroupName><Launcher><LauncherIcon c="#bdbbb9" /></Launcher></GroupFoot>
  </Group>
);

const StylesGroup = () => (
  <Group $w={305}>
    <GroupBody $pl={10}>
      <BigButton $w={106}>
        <BigIcon><CondIcon /></BigIcon>
        <BigLine $off>Formato</BigLine>
        <BigLine $off>condicional <OffChev /></BigLine>
      </BigButton>
      <BigButton $w={102}>
        <BigIcon><TableIcon /></BigIcon>
        <BigLine $off>Dar formato</BigLine>
        <BigLine $off>como tabla <OffChev /></BigLine>
      </BigButton>
      <BigButton $w={74}>
        <BigIcon><CellStyleIcon /></BigIcon>
        <BigLine $off>Estilos de</BigLine>
        <BigLine $off>celda <OffChev /></BigLine>
      </BigButton>
    </GroupBody>
    <GroupFoot><GroupName>Estilos</GroupName></GroupFoot>
  </Group>
);

const CellsGroup = () => (
  <Group $w={140}>
    <GroupBody $pl={14}>
      <Col>
        <CellRow $w={110}><InsertIcon /><RibbonText $off $ml={3}>Insertar</RibbonText><Slot $w={10} $ml={14}><Chev /></Slot></CellRow>
        <CellRow $w={110}><DeleteIcon /><RibbonText $off $ml={3}>Eliminar</RibbonText><Slot $w={10} $ml={14}><Chev /></Slot></CellRow>
        <CellRow $w={110}><FormatIcon /><RibbonText $ml={3}>Formato</RibbonText><Slot $w={10} $ml={7}><Chev /></Slot></CellRow>
      </Col>
    </GroupBody>
    <GroupFoot><GroupName>Celdas</GroupName></GroupFoot>
  </Group>
);

const EditGroup = () => (
  <Group $w={254}>
    <GroupBody $pl={14}>
      <Col $w={46}>
        <CellRow $w={46}><Slot $w={24}><SumIcon /></Slot><Slot $w={20} $ml={2}><Chev /></Slot></CellRow>
        <CellRow $w={46}><Slot $w={24}><FillDownIcon /></Slot><Slot $w={16}><Chev /></Slot></CellRow>
        <CellRow $w={46}><Slot $w={24}><EraserIcon /></Slot><Slot $w={16}><Chev /></Slot></CellRow>
      </Col>
      <BigButton $w={82}>
        <BigIcon><SortIcon /></BigIcon>
        <BigLine>Ordenar y</BigLine>
        <BigLine>filtrar <Chev /></BigLine>
      </BigButton>
      <BigButton $w={100}>
        <BigIcon><FindIcon /></BigIcon>
        <BigLine>Buscar y</BigLine>
        <BigLine>seleccionar <Chev /></BigLine>
      </BigButton>
    </GroupBody>
    <GroupFoot><GroupName>Edición</GroupName></GroupFoot>
  </Group>
);

const IdeasGroup = () => (
  <Group $w={79}>
    <GroupBody>
      <BigButton $w={77}>
        <BigIcon><BoltIcon /></BigIcon>
        <BigLine $off>Ideas</BigLine>
      </BigButton>
    </GroupBody>
    <GroupFoot><GroupName>Ideas</GroupName></GroupFoot>
  </Group>
);

const SensitivityGroup = () => (
  <Group $w={151}>
    <GroupBody>
      <BigButton $w={149}>
        <BigIcon><SensIcon /></BigIcon>
        <BigLine $off>Confidencialidad</BigLine>
        <BigLine><OffChev /></BigLine>
      </BigButton>
    </GroupBody>
    <GroupFoot><GroupName>Confidencialidad</GroupName></GroupFoot>
  </Group>
);

const App: React.FC = () => (
  <Window>
    <GlobalStyle />
    <TitleBar>
      <Circuit width="688" height="45" viewBox="0 0 688 45" fill="none" stroke="#1b6339" strokeWidth="3">
        <path d="M24 20h225" />
        <circle cx="18" cy="20" r="6" />
        <circle cx="256" cy="20" r="6" />
        <circle cx="373" cy="24" r="46" />
        <path d="M360 12h26v24M386 12l-28 30" strokeWidth="5" />
        <path d="M500 60l30-27h158M570 45l40-45M650 45l38-40" />
      </Circuit>
      <TitleText>Autoguardado</TitleText>
      <Toggle />
      <TitleSlot $ml={20}><SaveIcon /></TitleSlot>
      <TitleSlot $ml={19}><UndoIcon /></TitleSlot>
      <TitleSlot $ml={7}><Chev c="#62a07f" /></TitleSlot>
      <TitleSlot $ml={15}><UndoIcon flip /></TitleSlot>
      <TitleSlot $ml={7}><Chev c="#62a07f" /></TitleSlot>
      <TitleSlot $ml={20}><QatIcon /></TitleSlot>
      <TitleText $ml={27} $size={15.8}>Planilha de Controle de Vendas 4.0 - Exemplo.xlsx  -  Ex...</TitleText>
      <SearchBox><SearchIcon /><span>Buscar</span></SearchBox>
      <TitleSlot $ml={289}><WarnIcon /></TitleSlot>
      <TitleText $ml={14}>Leandro Borges</TitleText>
      <Avatar>LB</Avatar>
      <TitleSlot $ml={31}><RibbonModeIcon /></TitleSlot>
      <TitleSlot $ml={38}><MinIcon /></TitleSlot>
      <TitleSlot $ml={37}><RestoreIcon /></TitleSlot>
      <TitleSlot $ml={38}><CloseIcon /></TitleSlot>
    </TitleBar>

    <TabBar>
      {RIBBON_TABS.map(t => <RibbonTab key={t} $on={t === 'Inicio'}>{t}</RibbonTab>)}
      <TabActions>
        <ActionButton $w={129}><ShareIcon />Compartir</ActionButton>
        <ActionButton $w={150}><CommentIcon />Comentarios</ActionButton>
      </TabActions>
    </TabBar>

    <Ribbon>
      <ClipboardGroup />
      <FontGroup />
      <AlignGroup />
      <NumberGroup />
      <StylesGroup />
      <CellsGroup />
      <EditGroup />
      <IdeasGroup />
      <SensitivityGroup />
      <Collapse><Chev c="#444" up /></Collapse>
    </Ribbon>

    <FormulaBar>
      <NameBox>C5<Tri dir="d" s={7} /></NameBox>
      <BarDots>
        <svg width="3" height="14" viewBox="0 0 3 14" fill="#a5a5a5"><rect width="3" height="3" /><rect y="5" width="3" height="3" /><rect y="10" width="3" height="3" /></svg>
      </BarDots>
      <FnBox><CrossIcon /><CheckIcon /><FxMark>fx</FxMark></FnBox>
      <FormulaInput>Empresa x<Chev c="#444" /></FormulaInput>
    </FormulaBar>

    <SheetArea>
      <SheetMain>
        <ColHeaders>
          <Corner>
            <svg width="20" height="21" viewBox="0 0 20 21"><path d="M20 0v21H0z" fill="#b8b8b8" /></svg>
          </Corner>
          {COLS.map(c => <ColHead key={c} $on={c === 'C'} $wide={c === 'K'}>{c}</ColHead>)}
        </ColHeaders>
        <SheetBody>
          <RowHeads>
            {ROW_HEIGHTS.map((h, i) => <RowHead key={i} $h={h} $on={i === 4}>{i + 1}</RowHead>)}
          </RowHeads>
          <Canvas>
            <MainNav>
              <Logo>
                <Bulb />
                <LogoWord>LUZ</LogoWord>
                <LogoRule />
                <LogoTag>Planilhas<br />Empresariais</LogoTag>
              </Logo>
              <NavItem $w={135} $on>CADASTRO</NavItem>
              <NavItem $w={132}>CONTROLE<br />DE VENDAS</NavItem>
              <NavItem $w={138}>METAS</NavItem>
              <NavItem $w={132}>RELATÓRIOS</NavItem>
              <NavItem $w={136}>DASHBOARDS</NavItem>
              <NavItem $w={138}>INSTRUÇÕES</NavItem>
            </MainNav>
            <SubNav>
              <SubItem $w={169}>PRODUTOS</SubItem>
              <SubItem $w={160} $on>CLIENTES</SubItem>
              <SubItem $w={200}>CANAIS DE VENDA</SubItem>
              <SubItem $w={166}>OUTROS</SubItem>
              <SubItem $w={164}>CRM</SubItem>
            </SubNav>
            <Gap />
            <HeadRow>
              <HeadCell />
              <HeadCell />
              {HEADS.map(h => (
                <HeadCell key={h} $fill>
                  {h}
                  <FilterBtn><Tri dir="d" c="#666" s={7} /></FilterBtn>
                </HeadCell>
              ))}
              <HeadCell $fill>-</HeadCell>
            </HeadRow>
            {Array.from({ length: 16 }, (_, r) => {
              const rec = RECORDS[r];
              return (
                <DataRow key={r}>
                  <Cell $blank />
                  <Cell $blank />
                  {Array.from({ length: 9 }, (_, c) => (
                    <Cell key={c} $picked={r === 0 && c === 0}>
                      {c === 2 && rec
                        ? <MailLink $big={r > 0}>{rec[c]}</MailLink>
                        : rec ? rec[c] : c === 0 ? '-' : ''}
                    </Cell>
                  ))}
                </DataRow>
              );
            })}
            <FreezeLine />
          </Canvas>
        </SheetBody>
      </SheetMain>
      <VScroll>
        <ScrollBtn $w={22} $h={23}><Tri dir="u" s={7} /></ScrollBtn>
        <VThumb />
        <VTrack />
        <ScrollBtn $w={22} $h={22}><Tri dir="d" s={7} /></ScrollBtn>
      </VScroll>
    </SheetArea>

    <SheetTabs>
      <TabArrows><Tri dir="l" c="#c4c4c4" /><Tri dir="r" c="#c4c4c4" /></TabArrows>
      {SHEETS.map(([n, w]) => <SheetTab key={n} $w={w} $on={n === 'Cad_C'} $tint={n === 'INI' ? '#7a5c2e' : undefined}>{n}</SheetTab>)}
      <AddSheet>
        <svg width="11" height="11" viewBox="0 0 11 11" stroke="#777" strokeWidth="2"><path d="M5.500 0v11M0 5.500h11" /></svg>
      </AddSheet>
      <HScroll>
        <HDots width="3" height="24" viewBox="0 0 3 24" fill="#b0b0b0">
          <rect y="1" width="3" height="3" /><rect y="10" width="3" height="3" /><rect y="19" width="3" height="3" />
        </HDots>
        <ScrollBtn $w={22} $h={23}><Tri dir="l" s={7} /></ScrollBtn>
        <HThumb />
        <HTrack />
        <ScrollBtn $w={22} $h={23}><Tri dir="r" s={7} /></ScrollBtn>
      </HScroll>
    </SheetTabs>

    <StatusBar>
      <MacroIcon />
      <ViewButton $on $w={54} $ml={1621}><NormalView /></ViewButton>
      <ViewButton $w={54}><LayoutView /></ViewButton>
      <ViewButton $w={54}><BreakView /></ViewButton>
      <Slot $w={12} $ml={10}><svg width="10" height="2" viewBox="0 0 10 2"><path d="M0 1h10" stroke="#777" strokeWidth="1.500" /></svg></Slot>
      <ZoomTrack><ZoomKnob /></ZoomTrack>
      <Slot $w={12}><svg width="11" height="11" viewBox="0 0 11 11" stroke="#777" strokeWidth="1.200"><path d="M5.500 0v11M0 5.500h11" /></svg></Slot>
      <Slot $w={32} $ml={12}>90%</Slot>
    </StatusBar>

    <Taskbar>
      <TaskPiece $w={470} $ml={65} $bg="#f0f0f0" />
      <TaskPiece $w={65} $ml={405} $bg="#3d5460" />
    </Taskbar>
  </Window>
);

export default App;
